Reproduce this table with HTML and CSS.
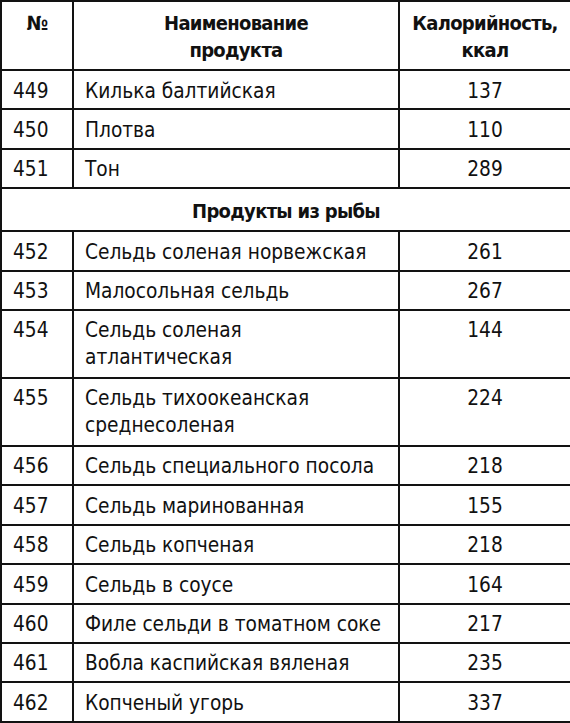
FILE: index.html
```html
<!DOCTYPE html>
<html lang="ru">
<head>
<meta charset="utf-8">
<link rel="stylesheet" href="styles.css">
</head>
<body>
<table class="cal">
  <colgroup>
    <col class="c-num">
    <col class="c-name">
    <col class="c-kcal">
  </colgroup>
  <thead>
    <tr class="head">
      <th>№</th>
      <th>Наименование<br>продукта</th>
      <th>Калорийность,<br>ккал</th>
    </tr>
  </thead>
  <tbody>
    <tr><td>449</td><td class="name">Килька балтийская</td><td class="kcal">137</td></tr>
    <tr><td>450</td><td class="name">Плотва</td><td class="kcal">110</td></tr>
    <tr><td>451</td><td class="name">Тон</td><td class="kcal">289</td></tr>
    <tr class="section"><td colspan="3">Продукты из рыбы</td></tr>
    <tr><td>452</td><td class="name">Сельдь соленая норвежская</td><td class="kcal">261</td></tr>
    <tr><td>453</td><td class="name">Малосольная сельдь</td><td class="kcal">267</td></tr>
    <tr class="two"><td>454</td><td class="name">Сельдь соленая<br>атлантическая</td><td class="kcal">144</td></tr>
    <tr class="two"><td>455</td><td class="name">Сельдь тихоокеанская<br>среднесоленая</td><td class="kcal">224</td></tr>
    <tr><td>456</td><td class="name">Сельдь специального посола</td><td class="kcal">218</td></tr>
    <tr><td>457</td><td class="name">Сельдь маринованная</td><td class="kcal">155</td></tr>
    <tr><td>458</td><td class="name">Сельдь копченая</td><td class="kcal">218</td></tr>
    <tr><td>459</td><td class="name">Сельдь в соусе</td><td class="kcal">164</td></tr>
    <tr><td>460</td><td class="name">Филе сельди в томатном соке</td><td class="kcal">217</td></tr>
    <tr><td>461</td><td class="name">Вобла каспийская вяленая</td><td class="kcal">235</td></tr>
    <tr><td>462</td><td class="name">Копченый угорь</td><td class="kcal">337</td></tr>
  </tbody>
</table>
</body>
</html>
```

FILE: styles.css
```css
html, body {
  margin: 0;
  padding: 0;
  background: #ffffff;
}

.cal {
  border-collapse: collapse;
  table-layout: fixed;
  width: 570px;
  font-family: "DejaVu Sans Condensed", "DejaVu Sans", "Liberation Sans", sans-serif;
  font-stretch: condensed;
  font-size: 20.7px;
  line-height: 27px;
  color: #111111;
}

.c-num { width: 72px; }
.c-name { width: 326px; }
.c-kcal { width: 172px; }

.cal th,
.cal td {
  border: 2px solid #121212;
  vertical-align: top;
  padding: 6.5px 0 3.9px 11px;
  text-align: left;
}

.cal .kcal {
  text-align: center;
  padding-left: 0;
}

.cal .name {
  padding-left: 11px;
}

.cal .two td {
  padding-bottom: 5.5px;
}

.head th {
  font-size: 20px;
  font-weight: bold;
  letter-spacing: -0.7px;
  text-align: center;
  line-height: 27px;
  padding: 8px 0 5px 0;
  vertical-align: top;
}

.section td {
  font-size: 20px;
  font-weight: bold;
  letter-spacing: -0.7px;
  text-align: center;
  padding: 9px 0 5px 0;
}
```
